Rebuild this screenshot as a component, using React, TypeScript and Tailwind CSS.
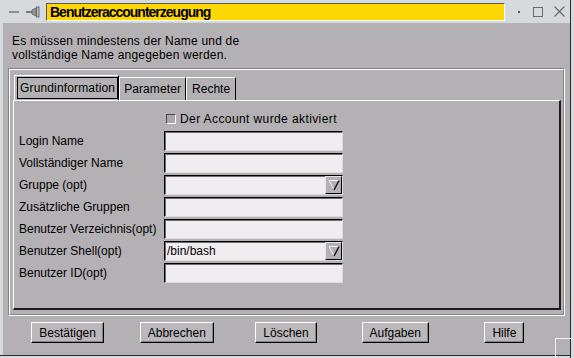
import React from "react"

const rows = [
  { label: "Login Name" },
  { label: "Vollständiger Name" },
  { label: "Gruppe (opt)", combo: true },
  { label: "Zusätzliche Gruppen" },
  { label: "Benutzer Verzeichnis(opt)" },
  { label: "Benutzer Shell(opt)", combo: true, value: "/bin/bash" },
  { label: "Benutzer ID(opt)" },
]

const buttons = ["Bestätigen", "Abbrechen", "Löschen", "Aufgaben", "Hilfe"]

const ComboArrow = () => (
  <svg width="12" height="12" viewBox="0 0 12 12">
    <polyline points="6,11 1,1.5 11,1.5" fill="none" stroke="#f4f4f4" strokeWidth="1" />
    <line x1="11" y1="1.5" x2="6" y2="11" stroke="#111" strokeWidth="1.4" />
  </svg>
)

const App = () => {
  return (
    <div className="relative flex w-[574px] h-[358px] overflow-hidden bg-[#d6dadd] font-['Liberation_Sans',Arial,sans-serif] text-[12px] text-black">
      <div className="flex flex-col w-[570px]">
        {/* title bar */}
        <div className="flex h-[23px] items-center">
          <div className="ml-[9px] w-[10px] h-[2px] bg-[#8c8c8c]" />
          <svg className="ml-[7px]" width="14" height="12" viewBox="0 0 14 12">
            <line x1="0" y1="6" x2="6" y2="6" stroke="#7a7a7a" strokeWidth="2" />
            <polygon points="6,4 10,2 10,10 6,8" fill="#9a9a9a" stroke="#6a6a6a" strokeWidth="1" />
            <rect x="10.5" y="1" width="2.5" height="10" fill="#bdbdbd" stroke="#6a6a6a" strokeWidth="1" />
          </svg>
          <div className="ml-[6px] self-start mt-[3px] flex items-center w-[459px] h-[18px] bg-[#ffd700] border border-t-[#5a5a5a] border-l-[#5a5a5a] border-b-white border-r-white pl-[3px]">
            <span className="text-[14px] font-bold tracking-[-1px] leading-none">Benutzeraccounterzeugung</span>
          </div>
          <div className="ml-[13px] w-[2px] h-[2px] bg-[#555]" />
          <div className="ml-[13px] w-[10px] h-[10px] border border-[#6a6a6a]" />
          <svg className="ml-[11px]" width="11" height="11" viewBox="0 0 11 11">
            <path d="M0.5 0.5 L10.5 10.5 M10.5 0.5 L0.5 10.5" stroke="#6a6a6a" strokeWidth="1.2" />
          </svg>
        </div>

        {/* window body */}
        <div className="ml-[3px] h-[332px] bg-[#b3b1b3] flex flex-col">
          <p className="pl-[9px] pt-[11px] leading-[14px] tracking-[0.2px]">
            Es müssen mindestens der Name und de
            <br />
            vollständige Name angegeben werden.
          </p>

          {/* groove frame */}
          <div className="mt-[6px] mx-[5px] h-[248px] border border-t-[#858385] border-l-[#858385] border-b-white border-r-white">
            <div className="h-full border border-t-white border-l-white border-b-[#858385] border-r-[#858385] pt-[5px] pl-[3px] pr-[2px] pb-[4px] flex flex-col">
              {/* tabs */}
              <div className="flex items-end h-[25px] ml-[1px]">
                <div className="flex h-[25px] border-t border-l border-white border-r border-r-black pt-[1px] pl-[2px]">
                  <span className="flex items-center h-[22px] border border-black px-[2px] tracking-[0.15px]">Grundinformation</span>
                </div>
                <div className="flex items-center h-[23px] border-t border-l border-white border-r border-r-black px-[4px] tracking-[0.1px]">Parameter</div>
                <div className="flex items-center h-[23px] border-t border-l border-white border-r border-r-black px-[5px]">Rechte</div>
              </div>

              {/* tab panel */}
              <div className="flex-1 border-t border-l border-white border-r-2 border-b-2 border-r-[#1c1c1c] border-b-[#1c1c1c] pl-[5px]">
                <div className="mt-[11px] h-[14px] flex items-center pl-[147px]">
                  <div className="w-[10px] h-[10px] border border-t-[#4a4a4a] border-l-[#4a4a4a] border-b-white border-r-white bg-[#a8a6a8]" />
                  <span className="ml-[4px] tracking-[0.4px]">Der Account wurde aktiviert</span>
                </div>
                <div className="mt-[5px] flex flex-col gap-[2px]">
                  {rows.map((r) => (
                    <div key={r.label} className="flex h-[20px] items-center">
                      <span className="w-[145px] whitespace-nowrap">{r.label}</span>
                      <div className="flex w-[179px] h-[20px] bg-[#f0ecf0] border border-t-black border-l-black border-b-[#dcdcdc] border-r-[#dcdcdc] shadow-[inset_1px_1px_0_#6e6c6e]">
                        <span className="flex-1 pl-[2px] flex items-center">{r.value ?? ""}</span>
                        {r.combo && (
                          <div className="w-[17px] h-full flex items-center justify-center bg-[#b3b1b3] border border-t-[#e4e4e4] border-l-[#e4e4e4] border-b-black border-r-black">
                            <ComboArrow />
                          </div>
                        )}
                      </div>
                    </div>
                  ))}
                </div>
              </div>
            </div>
          </div>

          {/* buttons */}
          <div className="mt-[6px] ml-[10px] w-[546px] grid grid-cols-5">
            {buttons.map((b) => (
              <button
                key={b}
                className="justify-self-center h-[21px] px-[7px] bg-[#bab8ba] border border-t-white border-l-white border-r-black border-b-black shadow-[inset_-1px_-1px_0_#858385] leading-none"
              >
                {b}
              </button>
            ))}
          </div>
        </div>
        <div className="h-[1px] bg-[#2a2a2a]" />
      </div>
      <div className="w-[1px] h-full bg-[#2a2a2a]" />

      {/* resize corner marks */}
      <div className="absolute left-[555px] top-[338px] w-[1px] h-[20px] bg-[#f4f4f4]" />
      <div className="absolute left-[555px] top-[338px] w-[19px] h-[1px] bg-[#f4f4f4]" />
    </div>
  )
}

export default App
